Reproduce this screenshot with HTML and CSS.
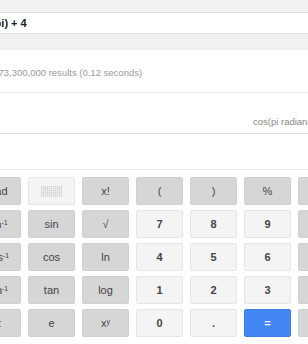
FILE: index.html
```html
<!DOCTYPE html>
<html lang="en">
<head>
    <meta charset="UTF-8">
    <meta name="viewport" content="width=device-width, initial-scale=1.0">
    <title>Calculator</title>
    <link rel="stylesheet" href="styles.css">
</head>
<body>
    <div class="topbar"></div>
    <div class="query">cos(pi) + 4</div>
    <div class="tabs"></div>
    <div class="stats">About 73,300,000 results (0.12 seconds)</div>
    <div class="answer">cos(pi radians) + 4 = 3</div>
    <div class="display"></div>

    <div class="keys">
        <button class="key dark">Rad</button>
        <button class="key light"><span class="deg"></span></button>
        <button class="key dark">x!</button>
        <button class="key dark">(</button>
        <button class="key dark">)</button>
        <button class="key dark">%</button>
        <button class="key dark">AC</button>

        <button class="key dark">sin<sup>-1</sup></button>
        <button class="key dark">sin</button>
        <button class="key dark">&radic;</button>
        <button class="key light num">7</button>
        <button class="key light num">8</button>
        <button class="key light num">9</button>
        <button class="key dark">&divide;</button>

        <button class="key dark">cos<sup>-1</sup></button>
        <button class="key dark">cos</button>
        <button class="key dark">ln</button>
        <button class="key light num">4</button>
        <button class="key light num">5</button>
        <button class="key light num">6</button>
        <button class="key dark">&times;</button>

        <button class="key dark">tan<sup>-1</sup></button>
        <button class="key dark">tan</button>
        <button class="key dark">log</button>
        <button class="key light num">1</button>
        <button class="key light num">2</button>
        <button class="key light num">3</button>
        <button class="key dark">&minus;</button>

        <button class="key dark">&pi;</button>
        <button class="key dark">e</button>
        <button class="key dark">x<sup>y</sup></button>
        <button class="key light num">0</button>
        <button class="key light num">.</button>
        <button class="key blue num">=</button>
        <button class="key dark">+</button>
    </div>
</body>
</html>
```

FILE: styles.css
```css
body {
    font-family: Arial, "Liberation Sans", sans-serif;
    margin: 0;
    padding: 0;
    width: 308px;
    height: 344px;
    overflow: hidden;
    background-color: #fff;
}

/* Bandas superiores */
.topbar {
    height: 12px;
    background-color: #f1f1f1;
    border-bottom: 1px solid #dcdcdc;
}

.query {
    height: 20px;
    line-height: 20px;
    font-size: 11px;
    font-weight: bold;
    color: #222;
    white-space: nowrap;
    text-indent: -28px;
    border-bottom: 1px solid #e0e0e0;
}

.tabs {
    height: 16px;
    background-color: #f1f1f1;
}

.stats {
    height: 25px;
    padding-top: 17px;
    line-height: 12px;
    font-size: 9.5px;
    color: #999;
    white-space: nowrap;
    text-indent: -29px;
    border-bottom: 1px solid #e8e8e8;
}

.answer {
    height: 17px;
    padding-top: 23px;
    padding-left: 253px;
    line-height: 12px;
    font-size: 9.5px;
    color: #888;
    white-space: nowrap;
    overflow: hidden;
    border-bottom: 1px solid #e0e0e0;
}

.display {
    height: 35px;
    border-bottom: 1px solid #e6e6e6;
}

/* Teclado */
.keys {
    display: grid;
    grid-template-columns: repeat(7, 47px);
    grid-auto-rows: 28px;
    column-gap: 7px;
    row-gap: 5px;
    padding-top: 7px;
    margin-left: -26px;
}

.key {
    font-family: Arial, "Liberation Sans", sans-serif;
    font-size: 11px;
    color: #444;
    border: 1px solid transparent;
    border-radius: 2px;
    padding: 0;
    display: flex;
    align-items: center;
    justify-content: center;
}

.key sup {
    font-size: 7px;
    line-height: 0;
    position: relative;
    top: -1px;
}

.dark {
    background-color: #d6d6d6;
    border-color: #d0d0d0;
}

.light {
    background-color: #f4f4f4;
    border-color: #e6e6e6;
}

.blue {
    background-color: #4387f2;
    border-color: #3b7de6;
    color: #fff;
}

.num {
    font-weight: bold;
}

.deg {
    width: 21px;
    height: 11px;
    background-image:
        repeating-linear-gradient(90deg, #dadada 0 1px, transparent 1px 2px),
        repeating-linear-gradient(0deg, #e2e2e2 0 1px, transparent 1px 2px);
}
```
